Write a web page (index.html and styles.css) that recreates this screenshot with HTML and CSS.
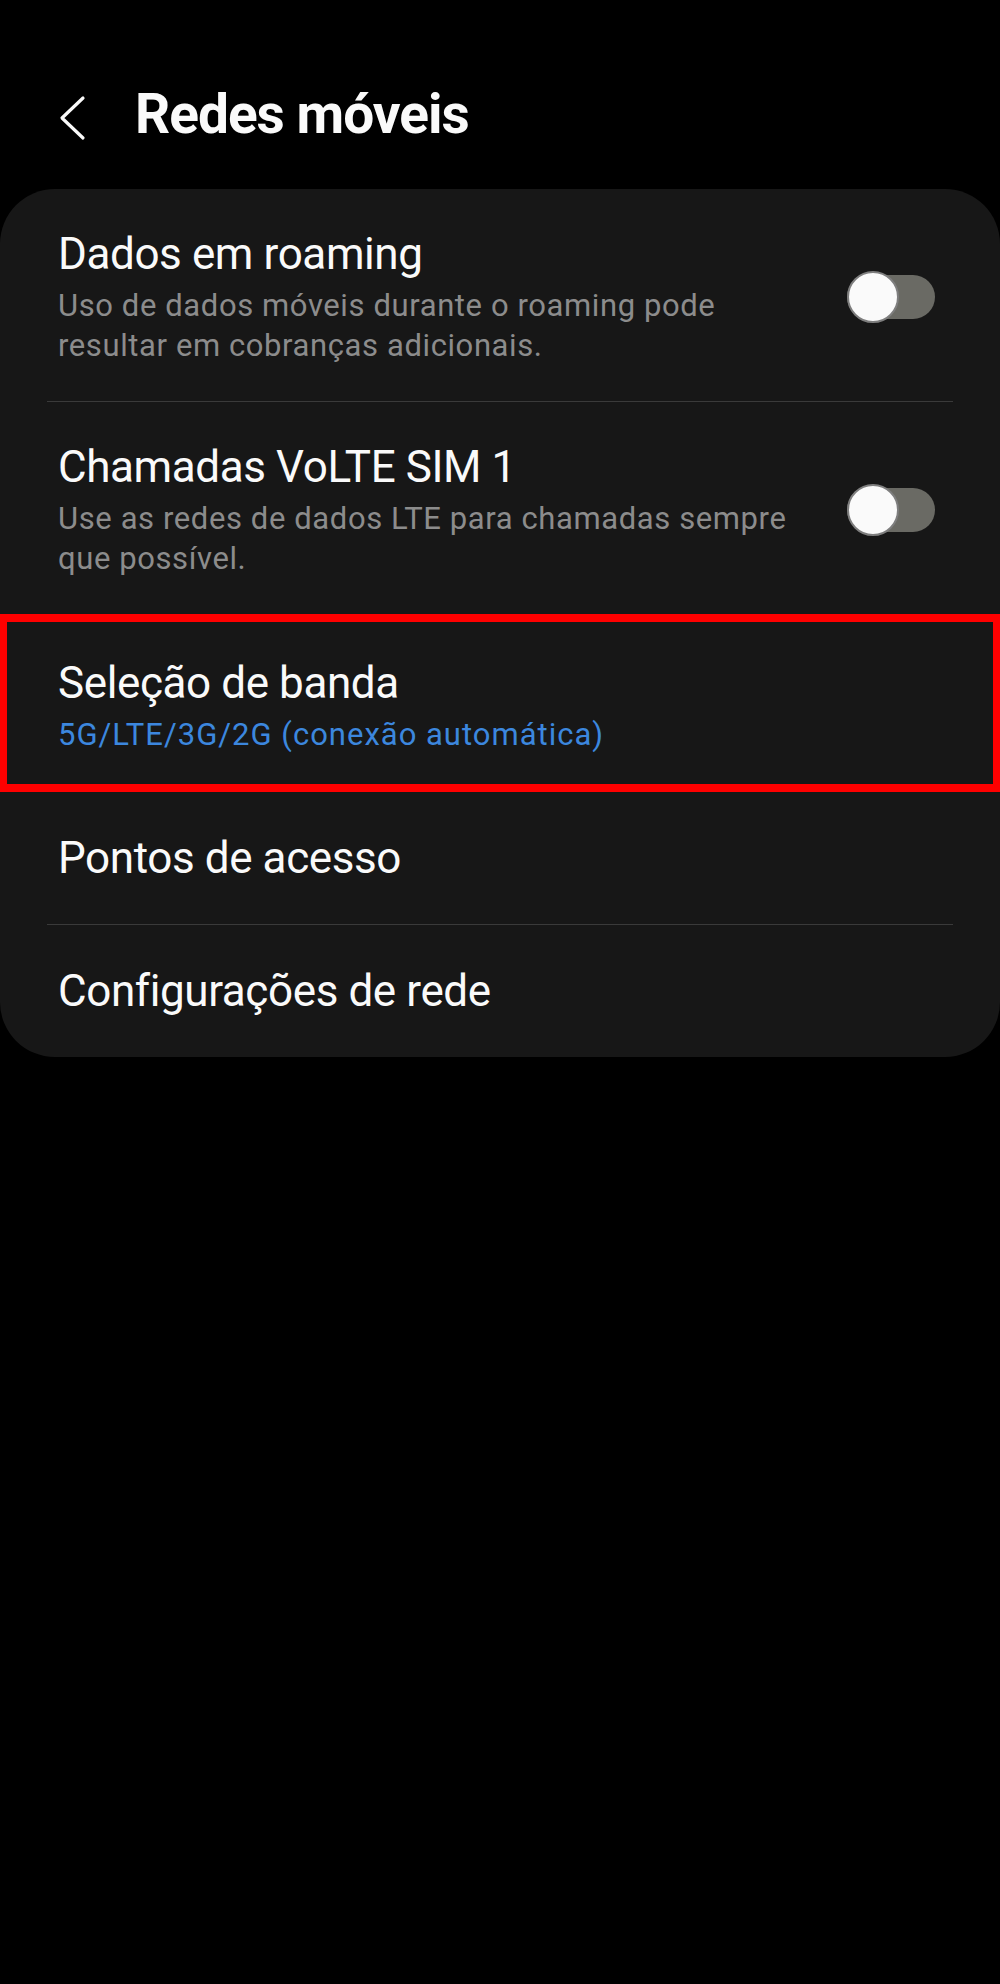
FILE: index.html
```html
<!DOCTYPE html>
<html lang="pt">
<head>
    <meta charset="UTF-8">
    <meta name="viewport" content="width=device-width, initial-scale=1.0">
    <title>Redes móveis</title>
    <link rel="stylesheet" href="styles.css">
</head>
<body>
    <header class="top-bar">
        <button class="back-button" aria-label="Voltar">
            <svg width="40" height="56" viewBox="0 0 40 56">
                <path d="M33 12 L12 32 L33 52" fill="none" stroke="#fafafa" stroke-width="3.2" stroke-linecap="round" stroke-linejoin="round"/>
            </svg>
        </button>
        <h1>Redes móveis</h1>
    </header>

    <main class="settings-card">
        <div class="setting-item">
            <div class="setting-text">
                <div class="setting-title">Dados em roaming</div>
                <div class="setting-summary">Uso de dados móveis durante o roaming pode resultar em cobranças adicionais.</div>
            </div>
            <span class="switch"><span class="switch-thumb"></span></span>
        </div>
        <hr class="divider">
        <div class="setting-item">
            <div class="setting-text">
                <div class="setting-title">Chamadas VoLTE SIM 1</div>
                <div class="setting-summary">Use as redes de dados LTE para chamadas sempre que possível.</div>
            </div>
            <span class="switch"><span class="switch-thumb"></span></span>
        </div>
        <hr class="divider">
        <div class="setting-item highlighted">
            <div class="setting-text">
                <div class="setting-title">Seleção de banda</div>
                <div class="setting-summary value">5G/LTE/3G/2G (conexão automática)</div>
            </div>
        </div>
        <hr class="divider">
        <div class="setting-item single">
            <div class="setting-title">Pontos de acesso</div>
        </div>
        <hr class="divider">
        <div class="setting-item single">
            <div class="setting-title">Configurações de rede</div>
        </div>
    </main>
</body>
</html>
```

FILE: styles.css
```css
/* Reset */
* {
    margin: 0;
    padding: 0;
    box-sizing: border-box;
}

body {
    background: #000000;
    color: #fafafa;
    font-family: Roboto, 'Noto Sans', Arial, sans-serif;
    width: 1000px;
    min-height: 1984px;
}

/* Header */
.top-bar {
    display: flex;
    align-items: center;
    padding: 82px 0 43px 50px;
    gap: 35px;
}

.back-button {
    background: none;
    border: none;
    display: flex;
    width: 50px;
    height: 64px;
    align-items: center;
}

h1 {
    font-size: 55px;
    line-height: 64px;
    font-weight: 700;
    letter-spacing: -1px;
}

/* Card */
.settings-card {
    background: #171717;
    border-radius: 55px;
}

.setting-item {
    display: flex;
    align-items: center;
    gap: 30px;
    padding: 39px 65px 35px 58px;
}

.setting-item.highlighted {
    padding: 42px 65px 36px 58px;
    outline: 8px solid #ff0000;
    outline-offset: -7px;
    position: relative;
}

.setting-item.single {
    padding: 40px 65px 40px 58px;
}

.setting-text {
    flex: 1;
}

.setting-title {
    font-size: 44px;
    line-height: 52px;
    letter-spacing: -0.4px;
}

.setting-summary {
    font-size: 31px;
    line-height: 40px;
    color: #8c8c8c;
    margin-top: 6px;
    letter-spacing: 0.6px;
}

.setting-summary.value {
    color: #3c87de;
    letter-spacing: 1px;
}

.divider {
    border: none;
    height: 1px;
    background: #3a3a3a;
    margin: 0 47px;
}

/* Toggle switch (off) */
.switch {
    width: 88px;
    height: 44px;
    border-radius: 22px;
    background: #6a6a64;
    display: flex;
    align-items: center;
    flex-shrink: 0;
}

.switch-thumb {
    width: 52px;
    height: 52px;
    border-radius: 50%;
    background: #fafafa;
    border: 2.5px solid #7e7e7e;
}
```
